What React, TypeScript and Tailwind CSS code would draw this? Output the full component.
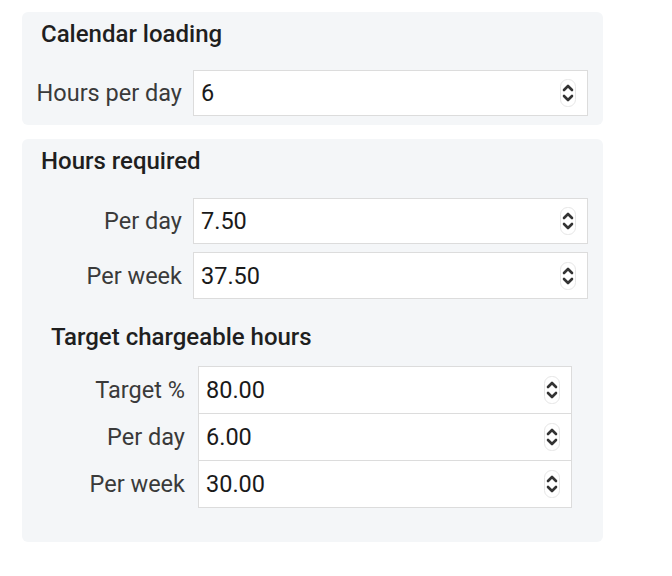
import type { ReactNode } from 'react';

const font = { fontFamily: 'Roboto, "Noto Sans", sans-serif' };

function Spinner() {
  return (
    <svg width="18" height="30" viewBox="0 0 18 30" className="shrink-0">
      <rect x="1.5" y="1.5" width="15" height="27" rx="7" fill="none" stroke="#e6e6e6" strokeWidth="1" />
      <path d="M5 12 L9 8 L13 12" fill="none" stroke="#333" strokeWidth="2.6" strokeLinecap="round" strokeLinejoin="round" />
      <path d="M5 18 L9 22 L13 18" fill="none" stroke="#333" strokeWidth="2.6" strokeLinecap="round" strokeLinejoin="round" />
    </svg>
  );
}

function NumberField({ value, className }: { value: string; className: string }) {
  return (
    <div
      className={`flex items-center border-[1.5px] border-[#dcdcdc] bg-white pl-[7px] pr-[10px] text-[23.5px] text-[#1a1a1a] ${className}`}
    >
      <span className="flex-1 pt-[2px]">{value}</span>
      <Spinner />
    </div>
  );
}

function Row({
  label,
  value,
  labelWidth,
  gap,
  inputWidth,
  height,
  extra = '',
}: {
  label: string;
  value: string;
  labelWidth: string;
  gap: string;
  inputWidth: string;
  height: string;
  extra?: string;
}) {
  return (
    <div className={`flex items-center ${extra}`}>
      <div className={`${labelWidth} pt-[2px] text-right text-[23.5px] leading-none text-[#3a3a3a]`}>{label}</div>
      <NumberField value={value} className={`${gap} ${inputWidth} ${height}`} />
    </div>
  );
}

function Panel({ children, className }: { children: ReactNode; className: string }) {
  return <div className={`ml-[22px] w-[581px] rounded-md bg-[#f4f6f8] ${className}`}>{children}</div>;
}

export default function App() {
  return (
    <div className="h-[576px] w-[672px] overflow-hidden bg-white pt-[12px]" style={font}>
      <Panel className="pb-[9px] pt-[8px]">
        <h2 className="pl-[19px] text-[24px] font-medium leading-[28px] text-[#1f1f1f]">Calendar loading</h2>
        <Row
          label="Hours per day"
          value="6"
          labelWidth="w-[160px]"
          gap="ml-[11px]"
          inputWidth="w-[395px]"
          height="h-[46px]"
          extra="mt-[22px]"
        />
      </Panel>

      <Panel className="mt-[14px] pb-[34px] pt-[8px]">
        <h2 className="pl-[19px] text-[24px] font-medium leading-[28px] text-[#1f1f1f]">Hours required</h2>
        <div className="mt-[23px] flex flex-col gap-[8px]">
          <Row label="Per day" value="7.50" labelWidth="w-[160px]" gap="ml-[11px]" inputWidth="w-[395px]" height="h-[46px]" />
          <Row label="Per week" value="37.50" labelWidth="w-[160px]" gap="ml-[11px]" inputWidth="w-[395px]" height="h-[47px]" />
        </div>

        <h3 className="mt-[24px] pl-[29px] text-[24px] font-medium leading-[28px] text-[#1f1f1f]">
          Target chargeable hours
        </h3>
        <div className="mt-[15px] flex flex-col">
          <Row label="Target %" value="80.00" labelWidth="w-[163px]" gap="ml-[13px]" inputWidth="w-[374px]" height="h-[48px]" />
          <Row label="Per day" value="6.00" labelWidth="w-[163px]" gap="ml-[13px]" inputWidth="w-[374px]" height="h-[48px]" extra="-mt-[1px]" />
          <Row label="Per week" value="30.00" labelWidth="w-[163px]" gap="ml-[13px]" inputWidth="w-[374px]" height="h-[48px]" extra="-mt-[1px]" />
        </div>
      </Panel>
    </div>
  );
}
